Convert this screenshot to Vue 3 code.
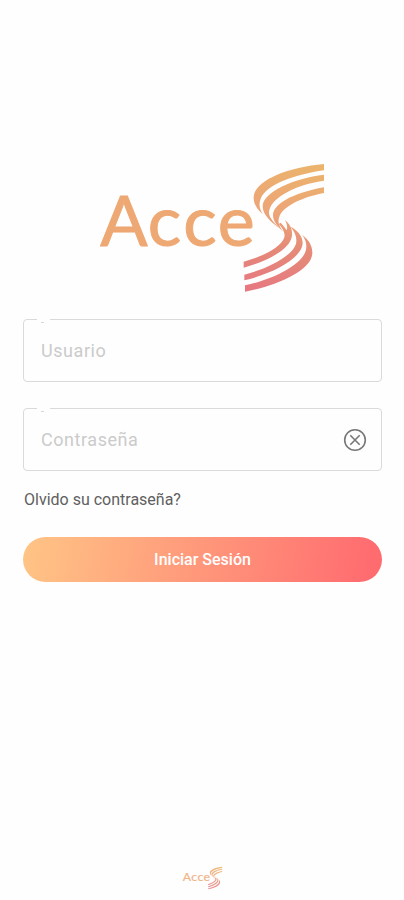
<script setup>
import { ref } from 'vue'

const user = ref('')
const password = ref('')
const logos = { main: 'logo', footer: 'logo logo-small' }
</script>

<template>
  <svg width="0" height="0" class="defs" aria-hidden="true">
    <defs>
      <linearGradient id="ribbon" gradientUnits="userSpaceOnUse" x1="620" y1="27" x2="540" y2="410">
        <stop offset="0" stop-color="#ebb36c" />
        <stop offset="0.4" stop-color="#eda577" />
        <stop offset="0.65" stop-color="#e58a78" />
        <stop offset="1" stop-color="#e67980" />
      </linearGradient>
      <symbol id="brand" viewBox="0 0 750 435">
        <text x="31 173 280 383" y="273" class="brand-text">Acce</text>
        <g fill="url(#ribbon)">
          <path d="M702 27C590 37 491 78 491 128C491 149 503 165 518 177C508 161 506 146 512 131C532 86 615 59 702 46Z" />
          <path d="M702 59C612 70 518 111 518 154C518 178 540 200 572 222C547 199 533 183 538 165C550 122 625 88 702 77Z" />
          <path d="M702 97C632 109 549 140 549 181C549 200 563 214 580 231C567 212 563 201 567 188C578 152 640 126 702 114Z" />
          <path d="M585 196C600 208 608 222 606 242C601 283 530 320 461 338V320C514 306 573 279 583 247C586 235 580 222 566 207L572 203C581 212 586 220 590 226C593 216 591 206 585 196Z" />
          <path d="M602 215C623 227 638 243 638 265C636 311 545 357 463 376V359C535 341 609 301 618 266C622 247 615 232 602 215Z" />
          <path d="M637 240C657 255 667 272 667 294C666 346 562 392 465 410V391C555 372 639 327 648 284C651 267 647 254 637 240Z" />
        </g>
      </symbol>
    </defs>
  </svg>
  <main class="screen">
    <svg :class="logos.main" role="img" aria-label="AcceS"><use href="#brand" /></svg>
    <form class="login" @submit.prevent>
      <label class="field">
        <span class="notch"></span>
        <input v-model="user" type="text" placeholder="Usuario" />
      </label>
      <label class="field">
        <span class="notch"></span>
        <input v-model="password" type="password" placeholder="Contraseña" />
        <svg class="clear" viewBox="0 0 24 24">
          <circle cx="12" cy="12" r="10.3" />
          <path d="M7.3 7.3L16.7 16.7M16.7 7.3L7.3 16.7" />
        </svg>
      </label>
      <a class="forgot">Olvido su contraseña?</a>
      <button class="submit" type="submit">Iniciar Sesión</button>
    </form>
    <svg :class="logos.footer" aria-hidden="true"><use href="#brand" /></svg>
  </main>
</template>

<style>
body {
  background: #fefefe;
}
</style>

<style scoped>
.defs {
  position: absolute;
}
.screen {
  box-sizing: border-box;
  height: 900px;
  padding: 155px 22px 9px 23px;
  display: flex;
  flex-direction: column;
  font-family: Roboto, sans-serif;
}
.logo {
  display: block;
  flex: none;
  width: 250px;
  height: 145px;
  margin-left: 67px;
}
.brand-text {
  font-family: Lato, sans-serif;
  font-size: 210px;
  fill: #eea873;
  stroke: #eea873;
  stroke-width: 3px;
  stroke-linejoin: round;
}
.login {
  display: flex;
  flex-direction: column;
  margin-top: 19px;
}
.field {
  position: relative;
  box-sizing: border-box;
  display: flex;
  align-items: center;
  height: 63px;
  padding: 0 14px 0 17px;
  border: 1px solid #dadada;
  border-radius: 4px;
}
.field + .field {
  margin-top: 26px;
}
.notch {
  position: absolute;
  top: -2px;
  left: 13px;
  width: 13px;
  height: 4px;
  background: #fefefe;
}
.notch::after {
  content: "";
  position: absolute;
  left: 4px;
  top: 4px;
  width: 3px;
  height: 1px;
  background: #d8d8d8;
}
input {
  flex: 1;
  min-width: 0;
  padding: 0 0 1px;
  border: 0;
  outline: 0;
  background: none;
  font: 400 18px Roboto, sans-serif;
  letter-spacing: 0.55px;
}
input::placeholder {
  color: #cbcbcb;
  opacity: 1;
}
.clear {
  width: 24px;
  height: 24px;
  fill: none;
  stroke: #777;
  stroke-width: 1.6;
}
.forgot {
  margin: 19px 0 0 1px;
  font-size: 16px;
  line-height: 20px;
  color: #606060;
}
.submit {
  height: 45px;
  margin-top: 27px;
  padding: 0;
  border: 0;
  border-radius: 23px;
  background: linear-gradient(100deg, #ffc385 2%, #ff6c70 96%);
  color: #fff;
  font: 500 16px Roboto, sans-serif;
}
.logo-small {
  width: 44px;
  height: 26px;
  margin: auto 0 0 158px;
  opacity: 0.85;
}
</style>
